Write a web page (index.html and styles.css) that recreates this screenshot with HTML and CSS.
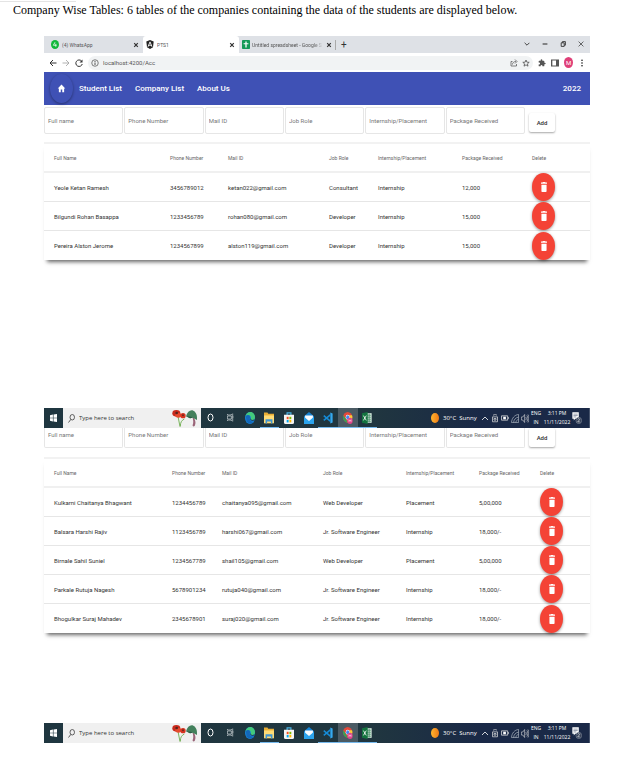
FILE: index.html
```html
<!DOCTYPE html>
<html lang="en">
<head>
<meta charset="utf-8">
<title>Company Wise Tables</title>
<link rel="stylesheet" href="styles.css">
</head>
<body>
<svg class="sprite" aria-hidden="true">
    <symbol id="close" viewBox="0 0 10 10"><path d="M2 2l6 6M8 2l-6 6" stroke="currentColor" stroke-width="2"/></symbol>
    <symbol id="whatsapp" viewBox="0 0 10 12" preserveAspectRatio="none"><ellipse cx="5" cy="6" rx="5" ry="6" fill="#12b83b"/><path d="M5 3L3 7h4M6 5v4" fill="none" stroke="#fff"/></symbol>
    <symbol id="angular" viewBox="0 0 24 24" preserveAspectRatio="none"><path d="M12 0l11 4-2 15-9 5-9-5L1 4z" fill="#222"/><path d="M6 18l6-13 6 13M8 14h8" fill="none" stroke="#fff" stroke-width="2.5"/></symbol>
    <symbol id="sheets" viewBox="0 0 10 12" preserveAspectRatio="none"><rect width="10" height="12" rx="1" fill="#159957"/><path d="M5 2v8M2 5h6" stroke="#fff" stroke-width="1.6"/></symbol>
    <symbol id="home" viewBox="0 0 24 24" preserveAspectRatio="none"><path d="M10 20v-6h4v6h5v-8h3L12 3 2 12h3v8z" fill="currentColor"/></symbol>
    <symbol id="trash" viewBox="0 0 14 18" preserveAspectRatio="none"><path d="M1 16c0 1.100.9 2 2 2h8c1.100 0 2-.9 2-2V5H1zM14 1h-3.500l-1-1h-5l-1 1H0v2h14z" fill="currentColor"/></symbol>
    <symbol id="back" viewBox="0 0 16 16"><path d="M15 8H2M8 2L2 8l6 6" fill="none" stroke="currentColor" stroke-width="2"/></symbol>
    <symbol id="forward" viewBox="0 0 16 16"><path d="M1 8h13M8 2l6 6-6 6" fill="none" stroke="currentColor" stroke-width="1.500"/></symbol>
    <symbol id="reload" viewBox="0 0 16 16"><path d="M13 4a6.500 6.500 0 1 0 1.500 6" fill="none" stroke="currentColor" stroke-width="2"/><path d="M15 1v6H9z" fill="currentColor"/></symbol>
    <symbol id="info" viewBox="0 0 16 16"><circle cx="8" cy="8" r="6.500" fill="none" stroke="currentColor" stroke-width="1.500"/><path d="M8 7v5M8 4v2" stroke="currentColor" stroke-width="2"/></symbol>
    <symbol id="share" viewBox="0 0 16 16"><path d="M5 5H2v9h11v-4M5 11c0-4 3-6 7-6M10 1l4 4-4 4" fill="none" stroke="currentColor" stroke-width="1.500"/></symbol>
    <symbol id="star" viewBox="0 0 24 24" preserveAspectRatio="none"><path d="M12 3l2.600 6.500 7 .5-5.300 4.500 1.700 7-6-4-6 4 1.700-7L2.400 10l7-.5z" fill="none" stroke="currentColor" stroke-width="2.500"/></symbol>
    <symbol id="puzzle" viewBox="0 0 24 24" preserveAspectRatio="none"><path d="M20.500 11H19V7a2 2 0 0 0-2-2h-4V3.500a2.500 2.500 0 0 0-5 0V5H4a2 2 0 0 0-2 2v3.800h1.500a2.700 2.700 0 0 1 0 5.400H2V20a2 2 0 0 0 2 2h3.800v-1.500a2.700 2.700 0 0 1 5.400 0V22H17a2 2 0 0 0 2-2v-4h1.500a2.500 2.500 0 0 0 0-5z" fill="currentColor"/></symbol>
    <symbol id="panel" viewBox="0 0 12 16" preserveAspectRatio="none"><path d="M1 2h10v12H1z" fill="none" stroke="currentColor" stroke-width="2"/><path d="M7.500 2H11v12H7.500z" fill="currentColor"/></symbol>
    <symbol id="dots" viewBox="0 0 6 16"><circle cx="3" cy="2.500" r="1.500"/><circle cx="3" cy="8" r="1.500"/><circle cx="3" cy="13.500" r="1.500"/></symbol>
    <symbol id="chevron-down" viewBox="0 0 10 10"><path d="M1 3l4 4 4-4" fill="none" stroke="currentColor" stroke-width="1.500"/></symbol>
    <symbol id="minimize" viewBox="0 0 10 10"><path d="M1 5h8" stroke="currentColor" stroke-width="1.800"/></symbol>
    <symbol id="restore" viewBox="0 0 10 10"><path d="M2 3h5v6H2zM4 3V1h5v6H7" fill="none" stroke="currentColor" stroke-width="1.500"/></symbol>
    <symbol id="exit" viewBox="0 0 10 10"><path d="M1 1l8 8M9 1L1 9" stroke="currentColor" stroke-width="1.200"/></symbol>
    <symbol id="windows" viewBox="0 0 12 14" preserveAspectRatio="none"><path d="M0 2l5-1v5.500H0zM6 1l6-1v6.500H6zM0 7.500h5V13l-5-1zM6 7.500h6V14l-6-1z" fill="#fff"/></symbol>
    <symbol id="search" viewBox="0 0 14 18" preserveAspectRatio="none"><ellipse cx="8.500" cy="6.500" rx="4.500" ry="5.500" fill="none" stroke="#333" stroke-width="1.500"/><path d="M5.500 11L1 17" stroke="#333" stroke-width="1.600"/></symbol>
    <symbol id="flowers" viewBox="0 0 78 54" preserveAspectRatio="none">
        <path d="M18 22l6 31M37 30c-8 4-12 10-12 22" fill="none" stroke="#79b45c" stroke-width="3"/>
        <ellipse cx="13" cy="13" rx="12" ry="10" fill="#c92a1c"/><ellipse cx="19" cy="19" rx="9" ry="7" fill="#e64a2e"/><circle cx="14" cy="12" r="4" fill="#55251e"/>
        <ellipse cx="33" cy="20" rx="8" ry="8" fill="#d6331f"/><circle cx="33" cy="19" r="3" fill="#6a2a20"/>
        <path d="M61 24l5 2c5 9 6 17 2 25-3 3-7 1-6-3 3-7 2-14-1-24z" fill="#9a6478"/>
        <path d="M42 22C46 7 56 1 64 5c9 4 12 15 11 28l-13-7-8 2z" fill="#43805c"/>
        <path d="M42 22l12 6 8-2-5-3z" fill="#2c5c47"/>
    </symbol>
    <symbol id="cortana" viewBox="0 0 14 18" preserveAspectRatio="none"><ellipse cx="7" cy="9" rx="5" ry="7" fill="none" stroke="#fff" stroke-width="2"/></symbol>
    <symbol id="taskview" viewBox="0 0 16 18" preserveAspectRatio="none"><path d="M1 2v2h9V2M1 16v-2h9v2M1 6h9v6H1zM13 1v16M12 8h3" fill="none" stroke="#ccd3d6" stroke-width="1.500"/></symbol>
    <symbol id="edge" viewBox="0 0 24 30" preserveAspectRatio="none">
        <ellipse cx="12" cy="15" rx="12" ry="15" fill="#1683d8"/>
        <path d="M1 12C2 4 7 0 13 0c7 0 11 7 11 13 0 5-3 7-7 7-3 0-4-2-3-4 1-5-2-8-6-8-3 0-5 1-7 4z" fill="#43ca7c"/>
        <path d="M2 10c5-5 11-2 10 4-2 6 2 11 9 10-4 6-12 7-17 0" fill="#1467b8"/>
        <path d="M13 14c-1 4 2 6 5 6l5-1v2l-6 1c-4-1-6-4-4-8z" fill="#1f3640"/>
    </symbol>
    <symbol id="folder" viewBox="0 0 26 28" preserveAspectRatio="none"><path d="M0 1h9l2 3h15v22H0z" fill="#e9ae35"/><path d="M0 8h26v18H0z" fill="#ffdc76"/><path d="M4 17h18v10h-4v-5H8v5H4z" fill="#4196d2"/></symbol>
    <symbol id="store" viewBox="0 0 26 30" preserveAspectRatio="none"><path d="M8 8V2h10v6" fill="none" stroke="#49b4e5" stroke-width="3"/><path d="M0 7h26v19q0 4-4 4H4q-4 0-4-4z" fill="#f5f5f5"/><path d="M7 12h5v6H7z" fill="#f25022"/><path d="M14 12h5v6h-5z" fill="#7fba00"/><path d="M7 20h5v6H7z" fill="#00a4ef"/><path d="M14 20h5v6h-5z" fill="#ffb900"/></symbol>
    <symbol id="mail" viewBox="0 0 28 28" preserveAspectRatio="none"><path d="M0 10L14 0l14 10v18H0z" fill="#1684d6"/><path d="M3 8h22v8l-11 8L3 16z" fill="#f7fbff"/><path d="M0 11l14 10 14-10v17H0z" fill="#2ca4ed"/></symbol>
    <symbol id="vscode" viewBox="0 0 26 30" preserveAspectRatio="none"><path d="M19 1l6 3v22l-6 3z" fill="#35a9ef"/><path d="M2 9l17 14M2 21L19 7" stroke="#168bd5" stroke-width="4"/></symbol>
    <symbol id="chrome" viewBox="0 0 30 34" preserveAspectRatio="none">
        <ellipse cx="14" cy="15" rx="14" ry="15" fill="#e3493b"/><path d="M1 9l9 14 4 7C5 30 0 22 0 15z" fill="#32a457"/><path d="M28 12c1 10-5 18-14 18l7-15-3-6h9z" fill="#f9cb38"/>
        <ellipse cx="14" cy="15" rx="6" ry="7" fill="#fff"/><ellipse cx="14" cy="15" rx="4.500" ry="5.500" fill="#4486ef"/>
        <ellipse cx="21" cy="25" rx="8" ry="9" fill="#e0458b"/><path d="M18 28v-6l3 3 3-3v6" fill="none" stroke="#fff" stroke-width="1.500"/>
    </symbol>
    <symbol id="excel" viewBox="0 0 28 30" preserveAspectRatio="none"><path d="M12 3h15v24H12z" fill="#dcefe4"/><path d="M14 8h11M14 13h11M14 18h11M14 23h11M20 4v22" stroke="#35835a" stroke-width="2"/><path d="M0 3l16-3v30L0 27z" fill="#14733f"/><path d="M4 9l8 12M12 9L4 21" stroke="#fff" stroke-width="2.200"/></symbol>
    <symbol id="caret-up" viewBox="0 0 16 18"><path d="M2 12l6-6 6 6" fill="none" stroke="#fff" stroke-width="1.600"/></symbol>
    <symbol id="meet" viewBox="0 0 16 22" preserveAspectRatio="none"><path d="M3 7h10v12H3zM4 3c3-2 6-2 8 0M6 11h4v4H6z" fill="none" stroke="#ddd" stroke-width="1.600"/></symbol>
    <symbol id="battery" viewBox="0 0 18 14" preserveAspectRatio="none"><path d="M1 2h14v10H1zM17 5v4" fill="none" stroke="#ddd" stroke-width="1.800"/><path d="M5 4h6v6H5z" fill="#fff"/></symbol>
    <symbol id="wifi" viewBox="0 0 18 20" preserveAspectRatio="none"><path d="M1 19C2 9 8 2 17 1v18zM6 19c0-6 4-11 11-12M11 19c0-3 2-6 6-7" fill="none" stroke="#b9c0ca" stroke-width="1.400"/></symbol>
    <symbol id="volume" viewBox="0 0 22 18" preserveAspectRatio="none"><path d="M1 6h4l5-5v16l-5-5H1zM13 6c2 2 2 4 0 6M16 3c4 4 4 8 0 12M19 1c4 5 4 11 0 16" fill="none" stroke="#ddd" stroke-width="1.400"/></symbol>
    <symbol id="notice" viewBox="0 0 28 34" preserveAspectRatio="none"><path d="M1 1h18v18H9l-4 5v-5H1z" fill="#fff"/><path d="M4 6h12M4 10h12M4 14h8" stroke="#42506a" stroke-width="1.500"/><ellipse cx="19" cy="24" rx="8" ry="9" fill="#344057" stroke="#c4c8d0"/><path d="M16 21c1-3 6-3 5 1l-5 6h6" fill="none" stroke="#fff" stroke-width="1.600"/></symbol>
</svg>

<div class="rule"></div>
<h1 class="title">Company Wise Tables: 6 tables of the companies containing the data of the students are displayed below.</h1>

<main class="shots">
    <section class="shot">
        <div class="tabs">
            <div class="tab">
                <svg class="favicon"><use href="#whatsapp"/></svg>
                <span class="tab-name">(4) WhatsApp</span>
                <button class="plain" aria-label="Close tab"><svg class="icon-small"><use href="#close"/></svg></button>
            </div>
            <div class="tab tab-active">
                <svg class="favicon"><use href="#angular"/></svg>
                <span class="tab-name">PTS1</span>
                <button class="plain" aria-label="Close tab"><svg class="icon-small"><use href="#close"/></svg></button>
            </div>
            <div class="tab tab-last">
                <svg class="favicon"><use href="#sheets"/></svg>
                <span class="tab-name tab-fade">Untitled spreadsheet - Google S</span>
                <button class="plain" aria-label="Close tab"><svg class="icon-small"><use href="#close"/></svg></button>
            </div>
            <button class="plain new-tab" aria-label="New tab">+</button>
            <div class="window-buttons">
                <button class="plain" aria-label="Search tabs"><svg class="icon-small"><use href="#chevron-down"/></svg></button>
                <button class="plain" aria-label="Minimize"><svg class="icon-small"><use href="#minimize"/></svg></button>
                <button class="plain" aria-label="Restore"><svg class="icon-small"><use href="#restore"/></svg></button>
                <button class="plain" aria-label="Close"><svg class="icon-small"><use href="#exit"/></svg></button>
            </div>
        </div>
        <div class="toolbar">
            <button class="plain" aria-label="Back"><svg class="icon"><use href="#back"/></svg></button>
            <button class="plain faded" aria-label="Forward"><svg class="icon"><use href="#forward"/></svg></button>
            <button class="plain" aria-label="Reload"><svg class="icon"><use href="#reload"/></svg></button>
            <div class="address">
                <svg class="icon"><use href="#info"/></svg>
                <input type="text" class="address-input" aria-label="Address" value="localhost:4200/Acc">
                <svg class="icon"><use href="#share"/></svg>
                <svg class="icon"><use href="#star"/></svg>
            </div>
            <svg class="icon"><use href="#puzzle"/></svg>
            <svg class="icon"><use href="#panel"/></svg>
            <span class="avatar">M</span>
            <svg class="icon"><use href="#dots"/></svg>
        </div>
        <nav class="navbar">
            <a href="#" class="home" aria-label="Home"><svg class="home-icon"><use href="#home"/></svg></a>
            <a href="#" class="nav-link">Student List</a>
            <a href="#" class="nav-link">Company List</a>
            <a href="#" class="nav-link">About Us</a>
            <span class="year">2022</span>
        </nav>
        <form class="form">
            <input type="text" class="field" aria-label="Full name" placeholder="Full name">
            <input type="text" class="field" aria-label="Phone Number" placeholder="Phone Number">
            <input type="text" class="field" aria-label="Mail ID" placeholder="Mail ID">
            <input type="text" class="field" aria-label="Job Role" placeholder="Job Role">
            <input type="text" class="field" aria-label="Internship/Placement" placeholder="Internship/Placement">
            <input type="text" class="field" aria-label="Package Received" placeholder="Package Received">
            <button type="button" class="add">Add</button>
        </form>
        <table class="students students-first">
            <thead>
                <tr><th>Full Name</th><th>Phone Number</th><th>Mail ID</th><th>Job Role</th><th>Internship/Placement</th><th>Package Received</th><th>Delete</th></tr>
            </thead>
            <tbody>
                <tr><td>Yeole Ketan Ramesh</td><td>3456789012</td><td>ketan022@gmail.com</td><td>Consultant</td><td>Internship</td><td>12,000</td><td><button class="delete" aria-label="Delete"><svg class="trash"><use href="#trash"/></svg></button></td></tr>
                <tr><td>Bilgundi Rohan Basappa</td><td>1233456789</td><td>rohan080@gmail.com</td><td>Developer</td><td>Internship</td><td>15,000</td><td><button class="delete" aria-label="Delete"><svg class="trash"><use href="#trash"/></svg></button></td></tr>
                <tr><td>Pereira Alston Jerome</td><td>1234567899</td><td>alston119@gmail.com</td><td>Developer</td><td>Internship</td><td>15,000</td><td><button class="delete" aria-label="Delete"><svg class="trash"><use href="#trash"/></svg></button></td></tr>
            </tbody>
        </table>
        <div class="empty empty-tall"></div>
        <footer class="taskbar">
            <button class="start" aria-label="Start"><svg class="start-icon"><use href="#windows"/></svg></button>
            <div class="search">
                <svg class="search-icon"><use href="#search"/></svg>
                <input type="text" class="search-input" aria-label="Search" placeholder="Type here to search">
                <svg class="flowers"><use href="#flowers"/></svg>
            </div>
            <div class="apps">
                <span class="app"><svg class="app-glyph"><use href="#cortana"/></svg></span>
                <span class="app"><svg class="app-glyph"><use href="#taskview"/></svg></span>
                <span class="app"><svg class="app-icon"><use href="#edge"/></svg></span>
                <span class="app app-open"><svg class="app-icon"><use href="#folder"/></svg></span>
                <span class="app"><svg class="app-icon"><use href="#store"/></svg></span>
                <span class="app"><svg class="app-icon"><use href="#mail"/></svg></span>
                <span class="app app-open"><svg class="app-icon"><use href="#vscode"/></svg></span>
                <span class="app app-open app-current"><svg class="app-icon"><use href="#chrome"/></svg></span>
                <span class="app app-open"><svg class="app-icon"><use href="#excel"/></svg></span>
            </div>
            <div class="tray">
                <span class="sun"></span>
                <span class="weather">30°C&nbsp; Sunny</span>
                <svg class="tray-icon"><use href="#caret-up"/></svg>
                <svg class="tray-icon"><use href="#meet"/></svg>
                <svg class="tray-icon tray-low"><use href="#battery"/></svg>
                <svg class="tray-icon"><use href="#wifi"/></svg>
                <svg class="tray-icon"><use href="#volume"/></svg>
                <span class="lang">ENG<br>IN</span>
                <span class="clock">3:11 PM<br>11/11/2022</span>
                <svg class="notice"><use href="#notice"/></svg>
            </div>
        </footer>
    </section>

    <section class="shot">
        <form class="form form-cut">
            <input type="text" class="field" aria-label="Full name" placeholder="Full name">
            <input type="text" class="field" aria-label="Phone Number" placeholder="Phone Number">
            <input type="text" class="field" aria-label="Mail ID" placeholder="Mail ID">
            <input type="text" class="field" aria-label="Job Role" placeholder="Job Role">
            <input type="text" class="field" aria-label="Internship/Placement" placeholder="Internship/Placement">
            <input type="text" class="field" aria-label="Package Received" placeholder="Package Received">
            <button type="button" class="add">Add</button>
        </form>
        <table class="students students-second">
            <thead>
                <tr><th>Full Name</th><th>Phone Number</th><th>Mail ID</th><th>Job Role</th><th>Internship/Placement</th><th>Package Received</th><th>Delete</th></tr>
            </thead>
            <tbody>
                <tr><td>Kulkarni Chaitanya Bhagwant</td><td>1234456789</td><td>chaitanya095@gmail.com</td><td>Web Developer</td><td>Placement</td><td>5,00,000</td><td><button class="delete" aria-label="Delete"><svg class="trash"><use href="#trash"/></svg></button></td></tr>
                <tr><td>Balsara Harshi Rajiv</td><td>1123456789</td><td>harshi067@gmail.com</td><td>Jr. Software Engineer</td><td>Internship</td><td>18,000/-</td><td><button class="delete" aria-label="Delete"><svg class="trash"><use href="#trash"/></svg></button></td></tr>
                <tr><td>Birnale Sahil Suniel</td><td>1234567789</td><td>shail105@gmail.com</td><td>Web Developer</td><td>Placement</td><td>5,00,000</td><td><button class="delete" aria-label="Delete"><svg class="trash"><use href="#trash"/></svg></button></td></tr>
                <tr><td>Parkale Rutuja Nagesh</td><td>5678901234</td><td>rutuja040@gmail.com</td><td>Jr. Software Engineer</td><td>Internship</td><td>18,000/-</td><td><button class="delete" aria-label="Delete"><svg class="trash"><use href="#trash"/></svg></button></td></tr>
                <tr><td>Bhogulkar Suraj Mahadev</td><td>2345678901</td><td>suraj020@gmail.com</td><td>Jr. Software Engineer</td><td>Internship</td><td>18,000/-</td><td><button class="delete" aria-label="Delete"><svg class="trash"><use href="#trash"/></svg></button></td></tr>
            </tbody>
        </table>
        <div class="empty"></div>
        <footer class="taskbar">
            <button class="start" aria-label="Start"><svg class="start-icon"><use href="#windows"/></svg></button>
            <div class="search">
                <svg class="search-icon"><use href="#search"/></svg>
                <input type="text" class="search-input" aria-label="Search" placeholder="Type here to search">
                <svg class="flowers"><use href="#flowers"/></svg>
            </div>
            <div class="apps">
                <span class="app"><svg class="app-glyph"><use href="#cortana"/></svg></span>
                <span class="app"><svg class="app-glyph"><use href="#taskview"/></svg></span>
                <span class="app"><svg class="app-icon"><use href="#edge"/></svg></span>
                <span class="app app-open"><svg class="app-icon"><use href="#folder"/></svg></span>
                <span class="app"><svg class="app-icon"><use href="#store"/></svg></span>
                <span class="app"><svg class="app-icon"><use href="#mail"/></svg></span>
                <span class="app app-open"><svg class="app-icon"><use href="#vscode"/></svg></span>
                <span class="app app-open app-current"><svg class="app-icon"><use href="#chrome"/></svg></span>
                <span class="app app-open"><svg class="app-icon"><use href="#excel"/></svg></span>
            </div>
            <div class="tray">
                <span class="sun"></span>
                <span class="weather">30°C&nbsp; Sunny</span>
                <svg class="tray-icon"><use href="#caret-up"/></svg>
                <svg class="tray-icon"><use href="#meet"/></svg>
                <svg class="tray-icon tray-low"><use href="#battery"/></svg>
                <svg class="tray-icon"><use href="#wifi"/></svg>
                <svg class="tray-icon"><use href="#volume"/></svg>
                <span class="lang">ENG<br>IN</span>
                <span class="clock">3:11 PM<br>11/11/2022</span>
                <svg class="notice"><use href="#notice"/></svg>
            </div>
        </footer>
    </section>
</main>
</body>
</html>
```

FILE: styles.css
```css
* {
    box-sizing: border-box;
}

body {
    margin: 0;
    background: #fff;
    font-family: Roboto, "Liberation Sans", sans-serif;
    font-size: 6px;
    color: #333;
}

input,
button {
    font-family: inherit;
    font-size: inherit;
    border: 0;
    padding: 0;
    background: none;
    color: inherit;
}

svg {
    display: block;
    flex: none;
}

.sprite {
    position: absolute;
    width: 0;
    height: 0;
}

.rule {
    width: 76px;
    height: 2px;
    border-bottom: 1px solid #e4e4e4;
}

.title {
    margin: 0;
    padding: 0 13px;
    font: 12px/16px "Liberation Serif", serif;
    color: #000;
}

.shots {
    margin: 18px 50px 0 44px;
}

/* browser */
.tabs {
    display: flex;
    height: 17px;
    background: #dee1e6;
}

.tab {
    display: flex;
    align-items: center;
    gap: 3px;
    width: 96px;
    padding: 0 4px 0 3px;
    color: #555;
}

.tab:first-child {
    width: 99px;
    padding-left: 7px;
}

.tab-active {
    background: #fff;
    border-radius: 3px 3px 0 0;
}

.tab-last {
    gap: 2px;
    padding-right: 3px;
}

.tab-name {
    flex: 1;
    min-width: 0;
    font-size: 5px;
    overflow: hidden;
    white-space: nowrap;
}

.tab-fade {
    mask-image: linear-gradient(to right, #000 85%, transparent);
}

.favicon {
    width: 8px;
    height: 9px;
}

.icon-small {
    width: 6px;
    height: 6px;
}

.icon {
    width: 8px;
    height: 8px;
}

.plain {
    display: flex;
    align-items: center;
    color: #333;
}

.faded {
    color: #999;
}

.new-tab {
    align-self: center;
    height: 10px;
    padding-left: 5px;
    border-left: 1px solid #aaa;
    font-size: 10px;
}

.window-buttons {
    display: flex;
    gap: 12px;
    height: 15px;
    margin-left: auto;
    padding-right: 6px;
}

.toolbar {
    display: flex;
    align-items: center;
    gap: 5px;
    height: 19px;
    padding: 0 4px 0 5px;
    color: #555;
    background: #fff;
}

.address {
    display: flex;
    flex: 1;
    align-items: center;
    gap: 4px;
    height: 14px;
    padding: 0 3px;
    border-radius: 7px;
    background: #f1f3f4;
}

.address-input {
    flex: 1;
    min-width: 0;
}

.avatar {
    width: 9px;
    border-radius: 50%;
    background: #df3f78;
    color: #fff;
    line-height: 11px;
    text-align: center;
}

.navbar {
    display: flex;
    align-items: center;
    gap: 13px;
    height: 33px;
    padding: 0 9px 0 6px;
    background: #3f51b5;
    color: #fff;
    font-size: 8px;
    font-weight: 500;
}

.home {
    display: flex;
    align-items: center;
    justify-content: center;
    width: 23px;
    height: 29px;
    margin-right: -7px;
    border-radius: 50%;
    color: #fff;
    box-shadow: 0 1px 3px rgba(0, 0, 0, 0.4);
}

.home-icon {
    width: 9px;
    height: 11px;
}

.nav-link {
    color: #fff;
    text-decoration: none;
}

.year {
    margin-left: auto;
}

/* new student form */
.form {
    display: grid;
    grid-template-columns: repeat(6, 1fr) 64px;
    align-items: center;
    height: 37px;
    padding: 2px 0 9px;
}

.field {
    min-width: 0;
    height: 27px;
    margin-right: 1px;
    padding: 0 3px;
    border: 1px solid #e6e6e6;
    border-radius: 2px;
}

.field::placeholder {
    color: #777;
    opacity: 1;
}

.add {
    width: 26px;
    height: 19px;
    margin: 3px 0 0 3px;
    border-radius: 2px;
    background: #fff;
    font-weight: 500;
    box-shadow: 0 1px 2px rgba(0, 0, 0, 0.35);
}

.form-cut {
    align-items: start;
    height: 29px;
    padding: 0 0 9px;
}

.form-cut .field {
    height: 20px;
    padding-bottom: 6px;
    border-top: 0;
    border-radius: 0 0 2px 2px;
}

.form-cut .add {
    margin-top: 0;
}

/* students */
.students {
    width: 100%;
    table-layout: fixed;
    border-spacing: 0;
    border-top: 2px solid #f2f2f2;
    background: #fff;
    box-shadow: 0 5px 4px -3px rgba(0, 0, 0, 0.6);
}

.students th,
.students td {
    height: 29px;
    padding: 0;
    border-bottom: 1px solid #e6e6e6;
    text-align: left;
    white-space: nowrap;
}

.students th {
    border-bottom-width: 2px;
    border-color: #f0f0f0;
    font-size: 5px;
    font-weight: 400;
    color: #666;
}

.students tr:last-child td {
    border-bottom: 0;
}

.students th:first-child,
.students td:first-child {
    padding-left: 10px;
}

.students-first th:nth-child(1) { width: 126px; }
.students-first th:nth-child(2) { width: 58px; }
.students-first th:nth-child(3) { width: 101px; }
.students-first th:nth-child(4) { width: 49px; }
.students-first th:nth-child(5) { width: 84px; }
.students-first th:nth-child(6) { width: 70px; }
.students-first th:nth-child(7) { width: 58px; }

.students-second th:nth-child(1) { width: 128px; }
.students-second th:nth-child(2) { width: 50px; }
.students-second th:nth-child(3) { width: 101px; }
.students-second th:nth-child(4) { width: 83px; }
.students-second th:nth-child(5) { width: 73px; }
.students-second th:nth-child(6) { width: 61px; }
.students-second th:nth-child(7) { width: 50px; }

.delete {
    display: flex;
    align-items: center;
    justify-content: center;
    width: 23px;
    height: 28px;
    border-radius: 50%;
    background: #f44336;
    color: #fff;
    box-shadow: 0 1px 3px rgba(0, 0, 0, 0.4);
}

.trash {
    width: 6px;
    height: 10px;
}

.empty {
    height: 90px;
}

.empty-tall {
    height: 148px;
}

/* taskbar */
.taskbar {
    display: flex;
    height: 20px;
    background: linear-gradient(to right, #1f3640, #20363f 60%, #1a2947 80%);
    color: #fff;
}

.start {
    display: flex;
    align-items: center;
    justify-content: center;
    width: 19px;
}

.start-icon {
    width: 7px;
    height: 8px;
}

.search {
    display: flex;
    align-items: center;
    gap: 4px;
    width: 138px;
    padding: 0 3px 0 5px;
    background: #f0f0f0;
    color: #333;
}

.search-icon {
    width: 7px;
    height: 9px;
}

.search-input {
    flex: 1;
    min-width: 0;
    font-family: "Open Sans", "Noto Sans", sans-serif;
}

.search-input::placeholder {
    color: #333;
    opacity: 1;
}

.flowers {
    width: 26px;
    height: 18px;
}

.apps {
    display: flex;
    width: 176px;
}

.app {
    display: flex;
    flex: 1;
    align-items: center;
    justify-content: center;
    border-bottom: 1px solid transparent;
}

.app-open {
    border-color: #76b9ed;
}

.app-current {
    background: #4b5b64;
}

.app-glyph {
    width: 7px;
    height: 9px;
}

.app-icon {
    width: 10px;
    height: 12px;
}

.tray {
    display: flex;
    align-items: center;
    margin-left: auto;
    padding-right: 7px;
    border-right: 1px solid #46536b;
    font-family: "Open Sans", "Noto Sans", sans-serif;
}

.sun {
    width: 8px;
    height: 10px;
    border-radius: 50%;
    background: linear-gradient(to right, #ffb52e, #ee7a17);
}

.weather {
    width: 41px;
    padding-left: 4px;
    white-space: nowrap;
}

.tray-icon {
    width: 10px;
    height: 9px;
    padding: 0 1px;
}

.tray-low {
    height: 6px;
}

.lang,
.clock {
    width: 12px;
    font-size: 5px;
    line-height: 9px;
    text-align: center;
}

.clock {
    width: 30px;
}

.notice {
    width: 10px;
    height: 12px;
}
```
